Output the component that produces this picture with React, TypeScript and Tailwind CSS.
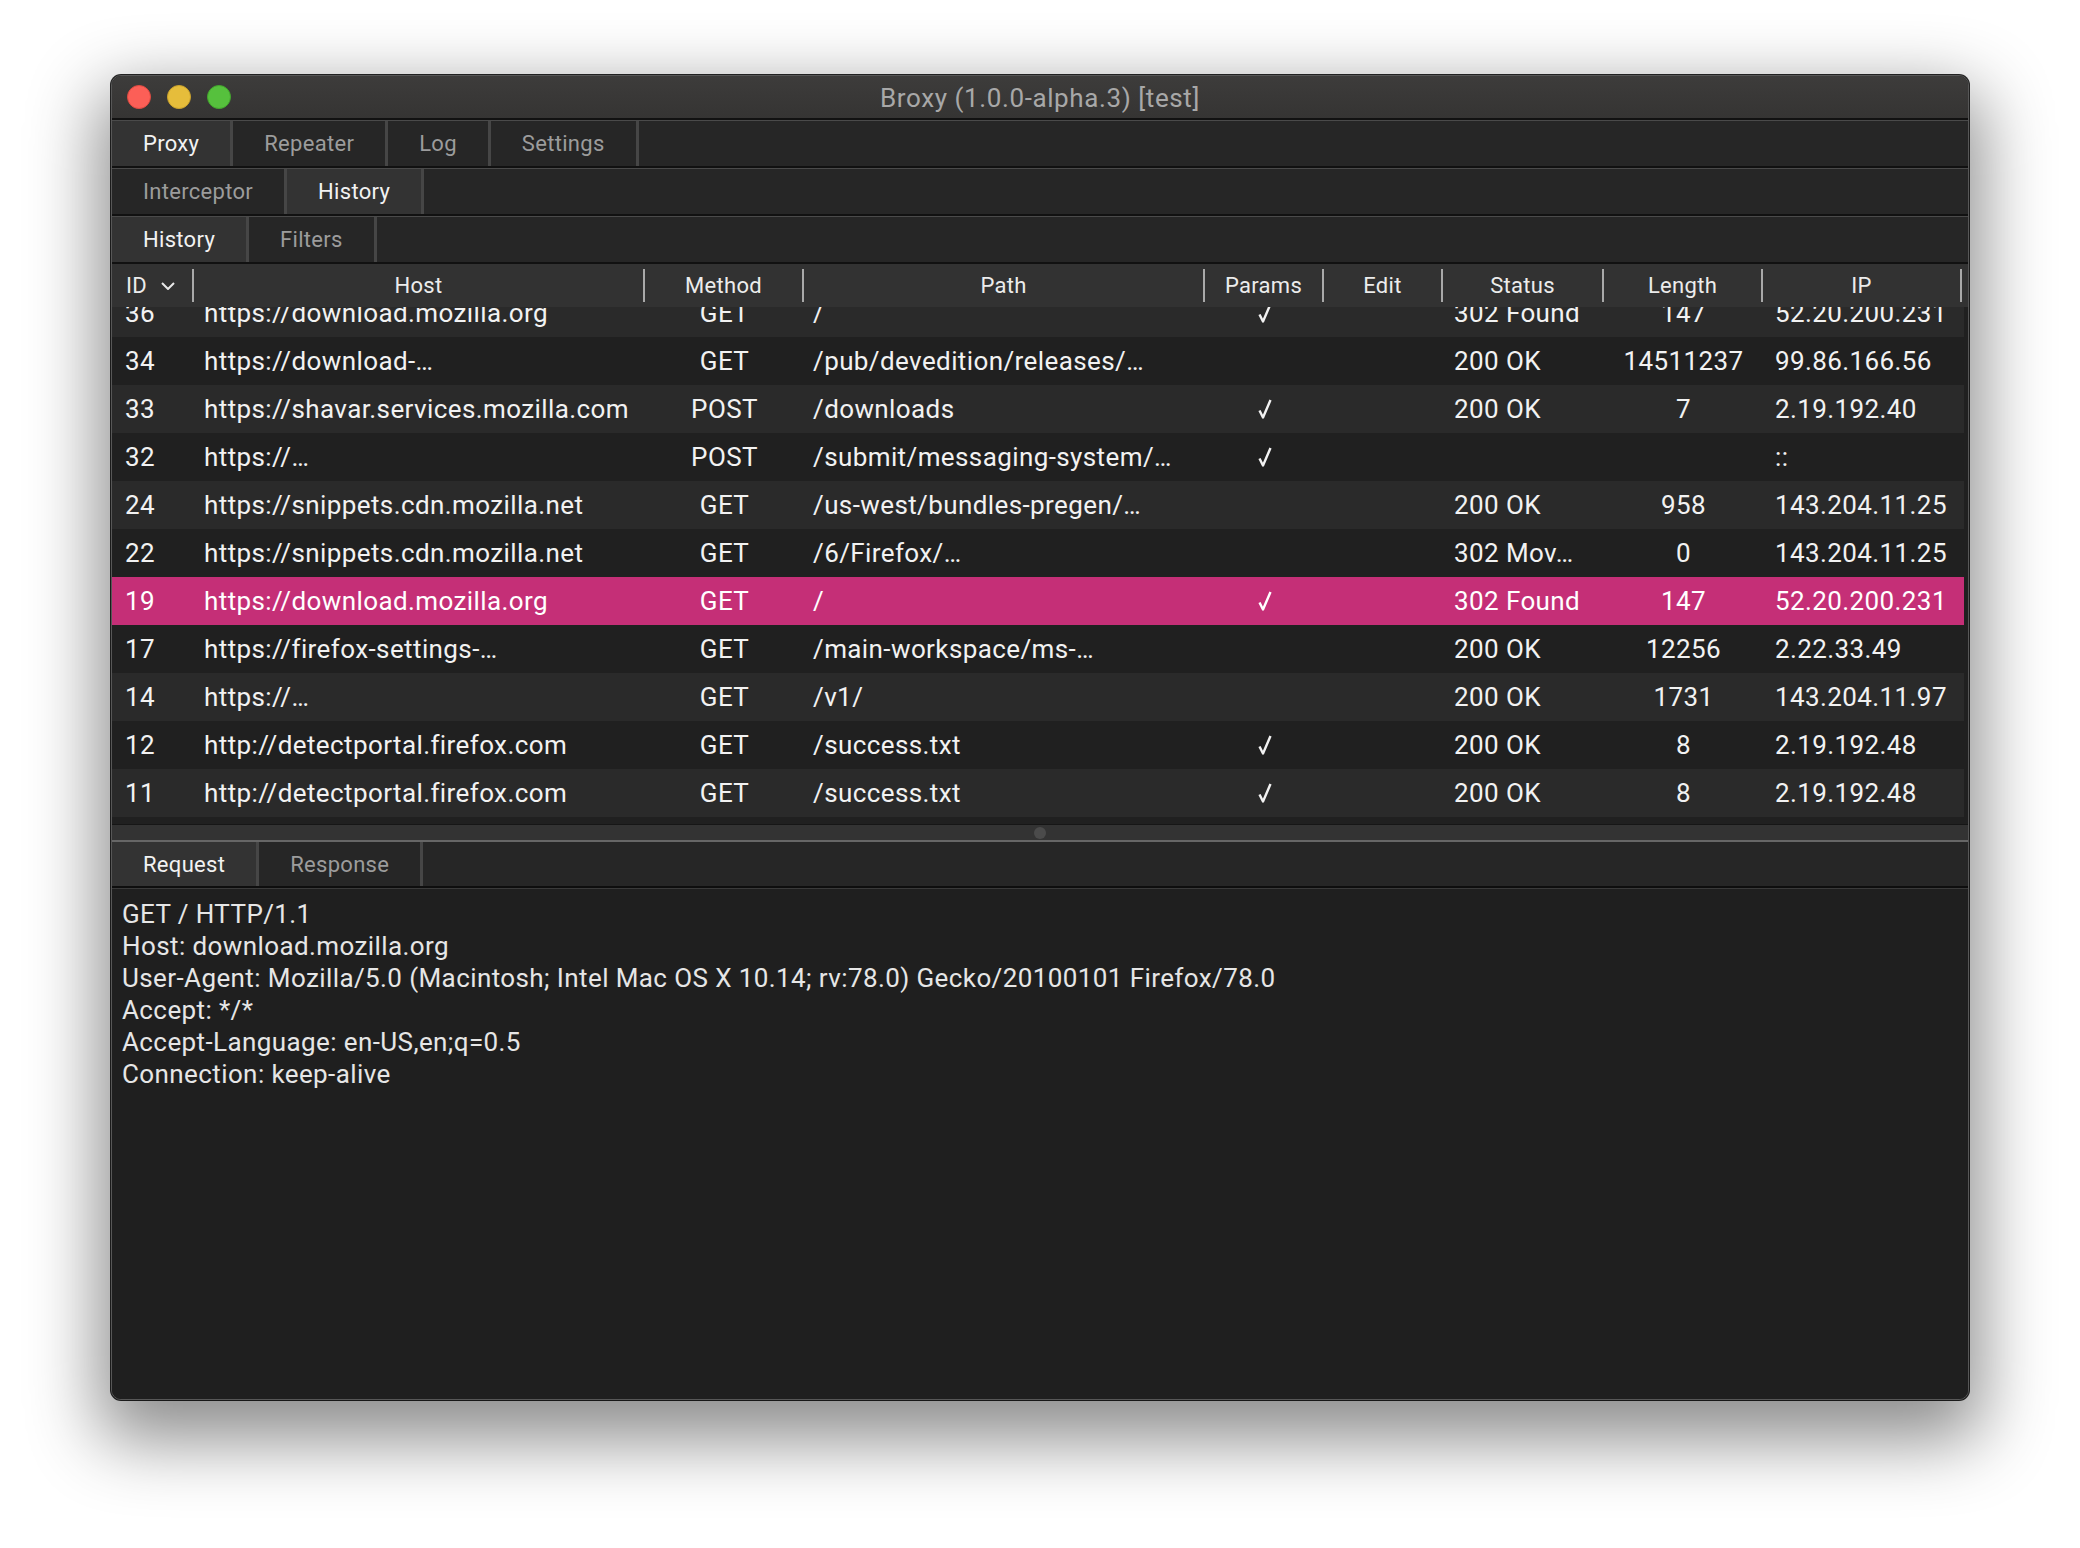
import React from "react";

type Row = {
  id: string;
  host: string;
  method: string;
  path: string;
  params: boolean;
  status: string;
  length: string;
  ip: string;
  selected?: boolean;
};

const rows: Row[] = [
  { id: "36", host: "https://download.mozilla.org", method: "GET", path: "/", params: true, status: "302 Found", length: "147", ip: "52.20.200.231" },
  { id: "34", host: "https://download-…", method: "GET", path: "/pub/devedition/releases/…", params: false, status: "200 OK", length: "14511237", ip: "99.86.166.56" },
  { id: "33", host: "https://shavar.services.mozilla.com", method: "POST", path: "/downloads", params: true, status: "200 OK", length: "7", ip: "2.19.192.40" },
  { id: "32", host: "https://…", method: "POST", path: "/submit/messaging-system/…", params: true, status: "", length: "", ip: "::" },
  { id: "24", host: "https://snippets.cdn.mozilla.net", method: "GET", path: "/us-west/bundles-pregen/…", params: false, status: "200 OK", length: "958", ip: "143.204.11.25" },
  { id: "22", host: "https://snippets.cdn.mozilla.net", method: "GET", path: "/6/Firefox/…", params: false, status: "302 Mov…", length: "0", ip: "143.204.11.25" },
  { id: "19", host: "https://download.mozilla.org", method: "GET", path: "/", params: true, status: "302 Found", length: "147", ip: "52.20.200.231", selected: true },
  { id: "17", host: "https://firefox-settings-…", method: "GET", path: "/main-workspace/ms-…", params: false, status: "200 OK", length: "12256", ip: "2.22.33.49" },
  { id: "14", host: "https://…", method: "GET", path: "/v1/", params: false, status: "200 OK", length: "1731", ip: "143.204.11.97" },
  { id: "12", host: "http://detectportal.firefox.com", method: "GET", path: "/success.txt", params: true, status: "200 OK", length: "8", ip: "2.19.192.48" },
  { id: "11", host: "http://detectportal.firefox.com", method: "GET", path: "/success.txt", params: true, status: "200 OK", length: "8", ip: "2.19.192.48" },
];

const requestLines = [
  "GET / HTTP/1.1",
  "Host: download.mozilla.org",
  "User-Agent: Mozilla/5.0 (Macintosh; Intel Mac OS X 10.14; rv:78.0) Gecko/20100101 Firefox/78.0",
  "Accept: */*",
  "Accept-Language: en-US,en;q=0.5",
  "Connection: keep-alive",
];

function Check() {
  return (
    <svg width="14" height="20" viewBox="0 0 14 20" fill="none" className="inline-block">
      <path d="M1.5 11.5 L5 18.5 L12.5 1" stroke="currentColor" strokeWidth="2.4" strokeLinejoin="round" />
    </svg>
  );
}

function Tab({ label, active }: { label: string; active?: boolean }) {
  return (
    <div
      className={
        active
          ? "h-full flex items-center px-[31px] border-r-[3px] border-[#464646] bg-[#333333] text-[#f2f2f2]"
          : "h-full flex items-center px-[31px] border-r-[3px] border-[#464646] text-[#9c9c9c]"
      }
    >
      {label}
    </div>
  );
}

function TabBar({ children }: { children: React.ReactNode }) {
  return (
    <div className="border-t-2 border-[#111111]">
      <div className="h-[46px] border-t border-[#4a4a4a] bg-[#262626] flex text-[22px] tracking-[0.3px]">
        {children}
      </div>
    </div>
  );
}

function HeadCell({ label, width }: { label: string; width: string }) {
  return (
    <div className={`${width} flex items-center`}>
      <span className="flex-1 text-center">{label}</span>
      <div className="w-[2px] h-[33px] bg-[#a9a9a9]" />
    </div>
  );
}

export default function App() {
  return (
    <div className="w-[2080px] h-[1548px] bg-white pt-[75px] pl-[111px] font-['Roboto','Liberation_Sans',sans-serif]">
      <div className="w-[1858px] h-[1325px] flex flex-col rounded-[10px] overflow-hidden border border-[#575757] bg-[#1f1f1f] shadow-[0_0_0_1px_rgba(0,0,0,0.85),0_28px_70px_12px_rgba(0,0,0,0.45)]">
        {/* title bar */}
        <div className="h-[42px] grid grid-cols-[1fr_auto_1fr] items-center bg-linear-to-b from-[#3d3c3b] to-[#353433]">
          <div className="flex items-center gap-[16px] pl-[15px]">
            <div className="w-[24px] h-[24px] rounded-full bg-[#fc5f57] border border-[#de4a41]" />
            <div className="w-[24px] h-[24px] rounded-full bg-[#e6bd3b] border border-[#caa22c]" />
            <div className="w-[24px] h-[24px] rounded-full bg-[#56c13d] border border-[#43a52d]" />
          </div>
          <div className="pt-[3px] text-[26px] tracking-[0.6px] text-[#a8a8a8]">Broxy (1.0.0-alpha.3) [test]</div>
          <div />
        </div>

        <TabBar>
          <Tab label="Proxy" active />
          <Tab label="Repeater" />
          <Tab label="Log" />
          <Tab label="Settings" />
        </TabBar>
        <TabBar>
          <Tab label="Interceptor" />
          <Tab label="History" active />
        </TabBar>
        <TabBar>
          <Tab label="History" active />
          <Tab label="Filters" />
        </TabBar>

        {/* table header */}
        <div className="border-t-2 border-[#111111]">
          <div className="h-[43px] bg-[#323232] flex text-[22px] tracking-[0.3px] text-[#ececec]">
            <div className="w-[82px] flex items-center">
              <span className="flex-1 flex items-center gap-[14px] pl-[14px]">
                ID
                <svg width="14" height="8" viewBox="0 0 14 8" fill="none">
                  <polyline points="1,1 7,7 13,1" stroke="#e8e8e8" strokeWidth="2" />
                </svg>
              </span>
              <div className="w-[2px] h-[33px] bg-[#a9a9a9]" />
            </div>
            <HeadCell label="Host" width="w-[451px]" />
            <HeadCell label="Method" width="w-[159px]" />
            <HeadCell label="Path" width="w-[401px]" />
            <HeadCell label="Params" width="w-[119px]" />
            <HeadCell label="Edit" width="w-[119px]" />
            <HeadCell label="Status" width="w-[161px]" />
            <HeadCell label="Length" width="w-[159px]" />
            <HeadCell label="IP" width="w-[199px]" />
          </div>
        </div>

        {/* table body */}
        <div className="h-[517px] overflow-hidden bg-[#202020]">
          <div className="mt-[-18px]">
            {rows.map((r, i) => (
              <div
                key={r.id}
                className={
                  r.selected
                    ? "h-[48px] w-[1852px] flex items-center whitespace-nowrap text-[26px] tracking-[0.4px] text-white bg-[#c52f77]"
                    : i % 2 === 0
                    ? "h-[48px] w-[1852px] flex items-center whitespace-nowrap text-[26px] tracking-[0.4px] text-[#f2f2f2] bg-[#2a2a2a]"
                    : "h-[48px] w-[1852px] flex items-center whitespace-nowrap text-[26px] tracking-[0.4px] text-[#f2f2f2] bg-[#202020]"
                }
              >
                <div className="w-[82px] pl-[13px] overflow-hidden">{r.id}</div>
                <div className="w-[451px] pl-[10px] overflow-hidden">{r.host}</div>
                <div className="w-[159px] text-center overflow-hidden">{r.method}</div>
                <div className="w-[401px] pl-[9px] overflow-hidden">{r.path}</div>
                <div className="w-[119px] flex justify-center">{r.params ? <Check /> : null}</div>
                <div className="w-[119px]"></div>
                <div className="w-[161px] pl-[11px] overflow-hidden">{r.status}</div>
                <div className="w-[159px] text-center overflow-hidden">{r.length}</div>
                <div className="w-[199px] pl-[12px] overflow-hidden">{r.ip}</div>
              </div>
            ))}
          </div>
        </div>

        {/* splitter */}
        <div className="h-[16px] border-t border-[#161616] bg-[#333333] flex items-center justify-center">
          <div className="w-[12px] h-[12px] rounded-full bg-[#4b4b4b]" />
        </div>
        <div className="h-[2px] bg-[#666666]" />

        {/* request / response tabs */}
        <div className="h-[44px] bg-[#262626] flex text-[22px] tracking-[0.3px]">
          <Tab label="Request" active />
          <Tab label="Response" />
        </div>
        <div className="h-[2px] bg-[#0e0e0e]" />
        <div className="h-[1px] bg-[#3a3a3a]" />

        {/* request body */}
        <div className="flex-1 bg-[#1f1f1f] pl-[10px] pt-[9px] text-[26px] tracking-[0.4px] leading-[32px] text-[#e6e6e6] whitespace-pre">
          {requestLines.map((l) => (
            <div key={l}>{l}</div>
          ))}
        </div>
      </div>
    </div>
  );
}
